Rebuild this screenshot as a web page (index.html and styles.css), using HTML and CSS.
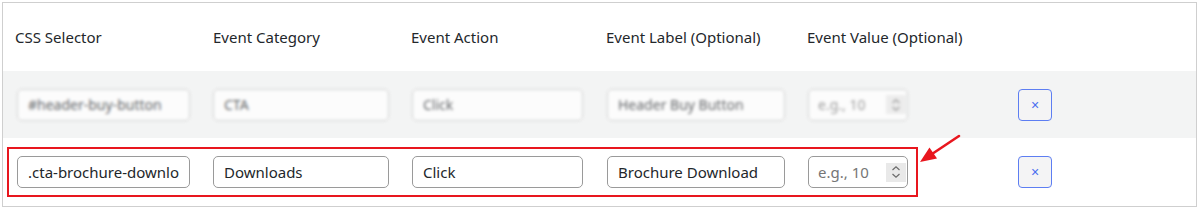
FILE: index.html
```html
<!DOCTYPE html>
<html lang="en">
<head>
    <meta charset="UTF-8">
    <meta name="viewport" content="width=device-width, initial-scale=1.0">
    <title>Event Tracking Rules</title>
    <link rel="stylesheet" href="styles.css">
</head>
<body>
    <div class="rules">

        <div class="row head">
            <div class="cell c1">CSS Selector</div>
            <div class="cell c2">Event Category</div>
            <div class="cell c3">Event Action</div>
            <div class="cell c4">Event Label (Optional)</div>
            <div class="cell c5">Event Value (Optional)</div>
        </div>

        <div class="row alt">
            <div class="fields blurred">
                <div class="cell c1"><input class="field w1" type="text" value="#header-buy-button"></div>
                <div class="cell c2"><input class="field w2" type="text" value="CTA"></div>
                <div class="cell c3"><input class="field w3" type="text" value="Click"></div>
                <div class="cell c4"><input class="field w4" type="text" value="Header Buy Button"></div>
                <div class="cell c5">
                    <div class="num">
                        <input type="text" placeholder="e.g., 10">
                        <span class="spin"><svg width="10" height="14" viewBox="0 0 10 14"><path d="M1.5 5 L5 1.8 L8.5 5 M1.5 9 L5 12.2 L8.5 9" fill="none" stroke="#6b6b6b" stroke-width="1.2"/></svg></span>
                    </div>
                </div>
            </div>
            <button class="remove">&times;</button>
        </div>

        <div class="row">
            <div class="fields marked">
                <div class="cell c1"><input class="field w1" type="text" value=".cta-brochure-download"></div>
                <div class="cell c2"><input class="field w2" type="text" value="Downloads"></div>
                <div class="cell c3"><input class="field w3" type="text" value="Click"></div>
                <div class="cell c4"><input class="field w4" type="text" value="Brochure Download"></div>
                <div class="cell last">
                    <div class="num">
                        <input type="text" placeholder="e.g., 10">
                        <span class="spin"><svg width="10" height="14" viewBox="0 0 10 14"><path d="M1.5 5 L5 1.8 L8.5 5 M1.5 9 L5 12.2 L8.5 9" fill="none" stroke="#6b6b6b" stroke-width="1.2"/></svg></span>
                    </div>
                </div>
            </div>
            <button class="remove gap">&times;</button>
        </div>

    </div>

    <!-- annotation arrow -->
    <svg class="arrow" width="1200" height="210" viewBox="0 0 1200 210">
        <line x1="959" y1="136" x2="929" y2="156" stroke="#e8161e" stroke-width="2.6" stroke-linecap="round"/>
        <polygon points="920,162 929.5,147.5 937,158.5" fill="#e8161e"/>
    </svg>
</body>
</html>
```

FILE: styles.css
```css
body{
 margin: 0;
 padding: 2px;
 font-family: 'Segoe UI', 'Noto Sans', 'Open Sans', sans-serif;
 color: #23272b;
 background: #fff;
}

.rules{
 width: 1193px;
 height: 203px;
 border: 1px solid #cfcfcf;
 display: flex;
 flex-direction: column;
}

.row{
 display: flex;
 align-items: center;
 height: 68px;
 padding-left: 14px;
}

.row.head{
 height: 68px;
 font-size: 15px;
 padding-left: 12px;
}

.row.alt{
 height: 67px;
 background-color: #f3f4f4;
}

.fields{
 display: flex;
 align-items: center;
}

.cell{
 flex: none;
}

.c1{ width: 196px; }
.c2{ width: 199px; }
.c3{ width: 195px; }
.c4{ width: 201px; }
.c5{ width: 210px; }
.last{ width: 100px; }

.head .c2{ padding-left: 2px; width: 197px; }
.head .c3{ padding-left: 1px; width: 195px; }

.field, .num{
 box-sizing: border-box;
 height: 32px;
 border: 1px solid #9a9a9a;
 border-radius: 5px;
 background: #fff;
 font-family: inherit;
 font-size: 15px;
 color: #23272b;
}

.field{
 padding: 0 10px;
}

.w1{ width: 173px; }
.w2{ width: 176px; }
.w3{ width: 171px; }
.w4{ width: 178px; }

.num{
 width: 100px;
 display: flex;
 align-items: center;
 padding-left: 9px;
}

.num input{
 width: 68px;
 border: none;
 outline: none;
 padding: 0;
 font-family: inherit;
 font-size: 15px;
 background: transparent;
}

.num input::placeholder{
 color: #767676;
}

.spin{
 width: 20px;
 height: 19px;
 background-color: #e9e9e9;
 display: flex;
 align-items: center;
 justify-content: center;
}

.blurred{
 filter: blur(1.8px);
 opacity: 0.7;
}

.blurred .field, .blurred .num{
 border-color: #c4c4c4;
 font-size: 14px;
}

.blurred .num input{
 font-size: 14px;
}

.marked{
 margin-left: -10px;
 padding: 7px 8px;
 border: 2px solid #e8161e;
}

.remove{
 width: 34px;
 height: 32px;
 padding: 0;
 border: 1.5px solid #5d7ef2;
 border-radius: 4px;
 background-color: #f4f4f5;
 color: #4a6cf0;
 font-size: 14px;
 line-height: 1;
}

.gap{
 margin-left: 100px;
}

.arrow{
 position: absolute;
 left: 0;
 top: 0;
 pointer-events: none;
}
```
